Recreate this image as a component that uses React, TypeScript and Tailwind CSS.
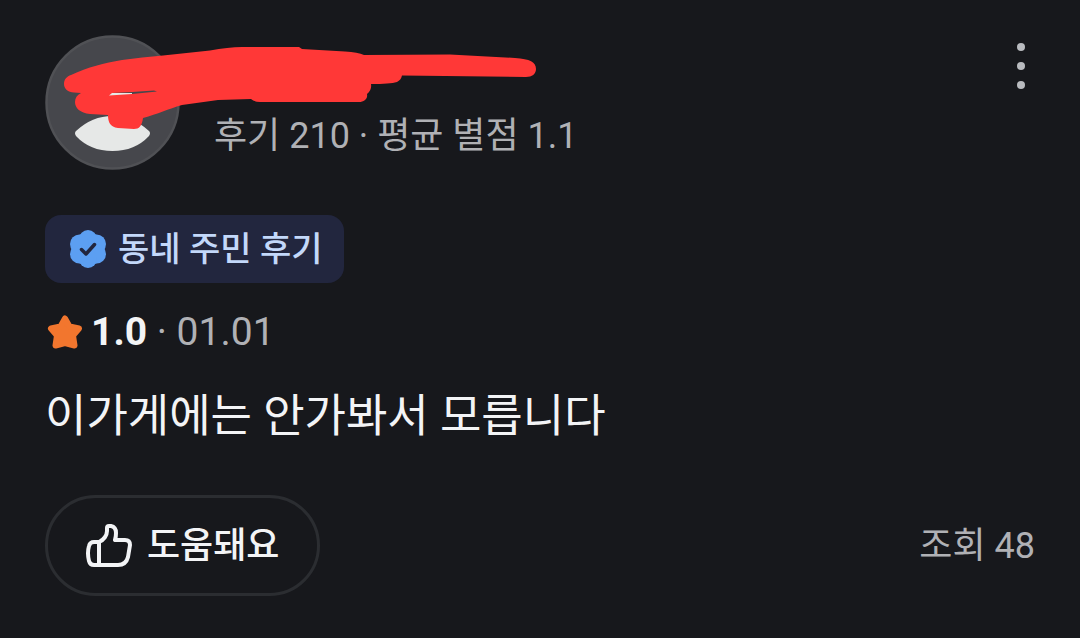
import { useState } from 'react';

function Avatar() {
  return (
    <svg viewBox="0 0 135 135" className="h-[135px] w-[135px] shrink-0" aria-hidden="true">
      <circle cx="67.5" cy="67.5" r="66" fill="#46474c" stroke="#505155" strokeWidth="2.5" />
      <path d="M31 96Q47 81 67.5 81T104 96Q106 98 104 101Q90 116 67.5 116T31 101Q29 98 31 96Z" fill="#e6e8e7" />
      <path d="M62 58H87V64H62Z" fill="#e6e8e7" />
    </svg>
  );
}

// marker strokes that hide the user name
function Scribble() {
  return (
    <svg
      viewBox="0 0 480 90"
      className="pointer-events-none absolute left-[15px] top-[5px] h-[90px] w-[480px]"
      aria-hidden="true"
    >
      <path
        fill="#ff3837"
        fillRule="evenodd"
        d="M11 35C28 27 44 23 62 20Q82 17 103 15.5L150 10.5Q168 7 182 7L239 7L242 9L285 11.5Q298 12 304 15L390 14.500L455 18C470 19 476 22 476 29C476 34 472 37 466 37L342 35.5Q341 40 337 42Q330 44 311 44Q312 50 307 54C308 59 304 62 299 62L200 62Q194 62 191 59L158 60L122 65C108 69 98 74 83 78C82 86 79 89 74 89L58 88C50 87 48 82 48 75L30 74C20 73 15 68 15 62C15 58 17 55 21 53L14 52.5C8 52 4 49 4 44C4 39 7 36.500 11 35ZM49 55.500L72 54L97 51.5L94 50.500L72 52L52 53Z"
      />
    </svg>
  );
}

function VerifiedIcon() {
  return (
    <svg viewBox="0 0 36 38" className="h-[38px] w-9 shrink-0" aria-hidden="true">
      <g fill="#5c9ff2">
        <circle cx="18" cy="19" r="16.5" />
        <circle cx="18" cy="9" r="9" />
        <circle cx="26.5" cy="14" r="9.5" />
        <circle cx="26.5" cy="24" r="9.5" />
        <circle cx="18" cy="29" r="9" />
        <circle cx="9.5" cy="24" r="9.5" />
        <circle cx="9.5" cy="14" r="9.5" />
      </g>
      <path
        d="M11.5 19.5L16 24L24.5 14.5"
        fill="none"
        stroke="#22263e"
        strokeWidth="3.5"
        strokeLinecap="round"
        strokeLinejoin="round"
      />
    </svg>
  );
}

function StarIcon() {
  return (
    <svg viewBox="0 0 36 36" className="h-9 w-9 shrink-0" aria-hidden="true">
      <path
        d="M18 4.500L22.500 12.500L32 14.500L26 21.500L27.500 31.500L18 29L8.500 31.500L10 21.500L4 14.500L13.500 12.500Z"
        fill="#f2762e"
        stroke="#f2762e"
        strokeWidth="6"
        strokeLinejoin="round"
      />
    </svg>
  );
}

function ThumbIcon() {
  return (
    <svg
      viewBox="0 0 48 46"
      className="h-[46px] w-12 shrink-0"
      fill="none"
      stroke="currentColor"
      strokeWidth="4"
      strokeLinecap="round"
      strokeLinejoin="round"
      aria-hidden="true"
    >
      <path d="M13 19C18 17 21 12 21 8V5Q21 3 23 3H25Q30 4 30 10Q30 14 29 17H39Q44 17 44 22L42 34Q40 42 32 42H8Q4 42 3 38Q1 30 3 23Q4 19 8 19Z" />
      <path d="M13 19V42" />
    </svg>
  );
}

export default function App() {
  const [helpful, setHelpful] = useState(false);

  return (
    <main
      lang="ko"
      className="min-h-screen bg-[#17181c] px-[45px] pt-[35px] pb-[42px] font-['Roboto','Noto_Sans_CJK_KR',sans-serif] text-[#f3f4f6]"
    >
      <article>
        <header className="relative flex items-start justify-between">
          <div className="flex items-end gap-[34px]">
            <Avatar />
            <p className="pb-3 text-[36px] leading-[44px] text-[#b0b1b5]">후기 210 · 평균 별점 1.1</p>
          </div>
          <button type="button" aria-label="더보기" className="mt-2 flex w-7 justify-center text-[#b9bbbf]">
            <svg viewBox="0 0 10 46" className="h-[46px] w-[10px]" fill="currentColor" aria-hidden="true">
              <circle cx="5" cy="4" r="4" />
              <circle cx="5" cy="23" r="4" />
              <circle cx="5" cy="42" r="4" />
            </svg>
          </button>
          <Scribble />
        </header>

        <div className="mt-[45px] inline-flex h-[68px] items-center gap-3 rounded-2xl bg-[#22263e] pr-[21px] pl-[25px] text-[#c3d8fa]">
          <VerifiedIcon />
          <span className="text-[34px] leading-[44px] font-medium">동네 주민 후기</span>
        </div>

        <div className="mt-[27px] flex items-center gap-2 pl-[2px] text-[39px] leading-[44px]">
          <StarIcon />
          <p className="text-[#b0b1b5]">
            <strong className="font-bold text-[#f3f4f6]">1.0</strong> · 01.01
          </p>
        </div>

        <p className="mt-[33px] text-[45px] leading-[60px]">이가게에는 안가봐서 모릅니다</p>

        <footer className="mt-12 flex items-center justify-between">
          <button
            type="button"
            aria-pressed={helpful}
            onClick={() => setHelpful(!helpful)}
            className="flex h-[101px] items-center gap-[13px] rounded-full border-3 border-[#2b2d31] px-[38px]"
          >
            <ThumbIcon />
            <span className="text-[36px] leading-[44px] font-medium">도움돼요</span>
          </button>
          <p className="text-[36px] leading-[44px] text-[#b0b1b5]">조회 48</p>
        </footer>
      </article>
    </main>
  );
}
